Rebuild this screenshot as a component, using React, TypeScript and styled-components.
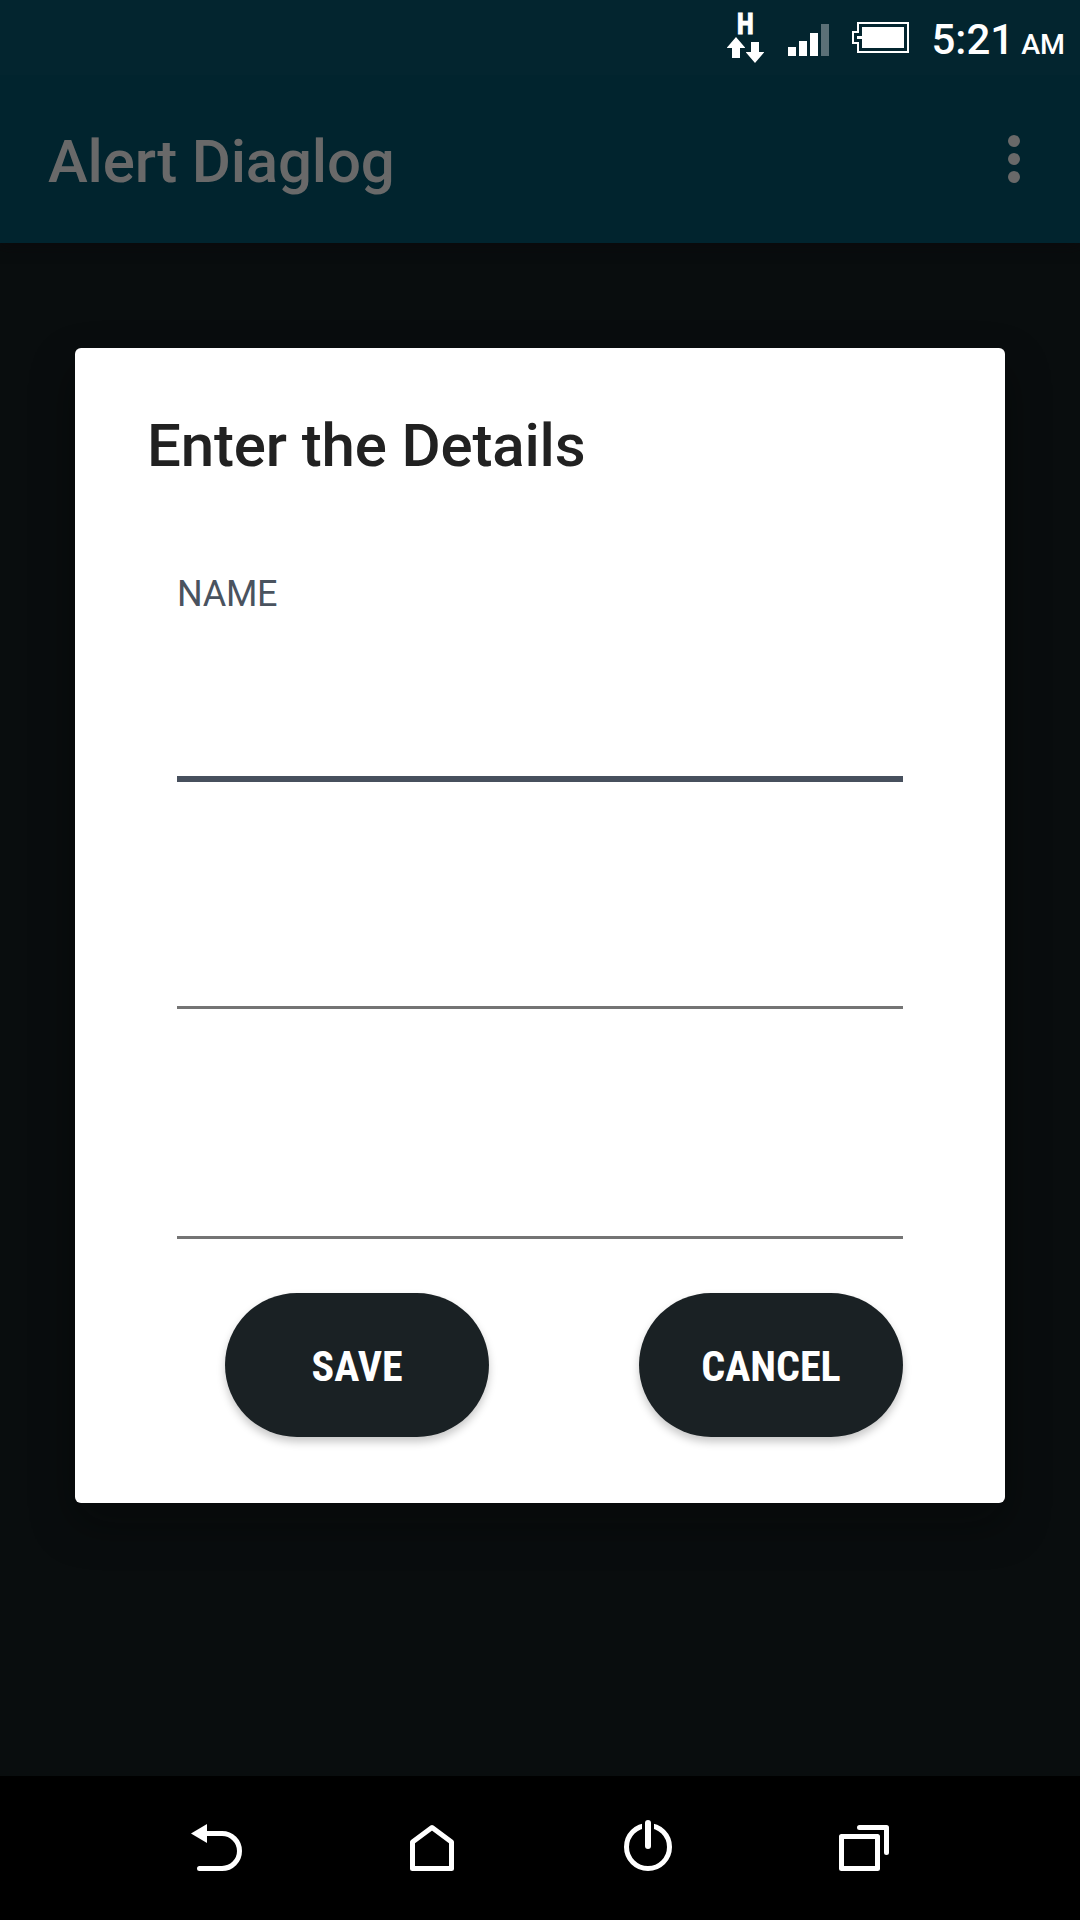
import React from "react";
import styled, { createGlobalStyle } from "styled-components";

const GlobalStyle = createGlobalStyle`
  html, body { margin: 0; padding: 0; background: #090d0e; }
  *, *::before, *::after { box-sizing: border-box; }
  body { font-family: Roboto, "Liberation Sans", sans-serif; }
`;

const Screen = styled.div`
  width: 1080px;
  height: 1920px;
  display: grid;
  grid-template-rows: 75px 168px 1533px 144px;
  background: #090d0e;
  overflow: hidden;
`;

const StatusBar = styled.header`
  display: flex;
  align-items: flex-start;
  justify-content: flex-end;
  padding-right: 15px;
  background: #03252f;
  color: #fff;
  z-index: 2;
`;

const Network = styled.div`
  display: flex;
  flex-direction: column;
  align-items: center;
  width: 38px;
  margin: 13px 24px 0 0;
`;

const NetworkType = styled.span`
  height: 24px;
  font-size: 29.5px;
  font-weight: 900;
  line-height: 23px;
  transform: scaleX(0.8);
  -webkit-text-stroke: 0.8px #fff;
`;

const StatusIcon = styled.svg<{ $top?: number; $right?: number }>`
  display: block;
  flex: none;
  margin-top: ${(p) => p.$top ?? 0}px;
  margin-right: ${(p) => p.$right ?? 0}px;
`;

const Clock = styled.div`
  display: flex;
  align-items: baseline;
  font-weight: 500;
  font-size: 42px;
  line-height: 48px;
  margin-top: 16px;
  gap: 7px;
  white-space: nowrap;
`;

const Meridiem = styled.span`
  font-size: 28.5px;
`;

const AppBar = styled.div`
  display: flex;
  align-items: flex-start;
  justify-content: space-between;
  padding: 60px 60px 0 48px;
  background: #01242e;
  color: #696969;
  z-index: 1;
  box-shadow: 0 3px 12px rgba(12, 8, 10, 0.6);
`;

const AppTitle = styled.h1`
  margin: -9px 0 0;
  font-size: 60px;
  font-weight: 500;
  line-height: 72px;
  letter-spacing: -0.18px;
`;

const Overflow = styled.svg`
  display: block;
`;

const Content = styled.main`
  display: flex;
  justify-content: center;
  align-items: flex-start;
  padding-top: 105px;
`;

const Dialog = styled.section`
  width: 930px;
  height: 1155px;
  display: flex;
  flex-direction: column;
  padding: 62px 102px 0;
  border-radius: 6px;
  background: #fff;
  box-shadow: 0 20px 44px rgba(6, 5, 6, 0.4);
`;

const DialogTitle = styled.h2`
  margin: 0 0 0 -30px;
  font-size: 60px;
  font-weight: 500;
  line-height: 72px;
  letter-spacing: -0.15px;
  color: #212121;
`;

const Field = styled.div<{ $height: number; $active?: boolean }>`
  height: ${(p) => p.$height}px;
  margin-bottom: ${(p) => (p.$active ? 0 : 3)}px;
  display: flex;
  flex-direction: column;
  border-bottom: ${(p) => (p.$active ? "6px solid #47505d" : "3px solid #747474")};
`;

const FieldLabel = styled.label`
  margin-top: 91px;
  font-size: 36px;
  line-height: 42px;
  letter-spacing: -0.3px;
  color: #4a535f;
`;

const Actions = styled.div`
  display: flex;
  justify-content: space-between;
  padding-left: 48px;
  margin-top: 51px;
`;

const ActionButton = styled.button`
  width: 264px;
  height: 144px;
  padding: 3px 0 0;
  border: 0;
  border-radius: 72px;
  background: #1a2124;
  color: #fff;
  font-family: "Roboto Condensed", Roboto, sans-serif;
  font-stretch: 75%;
  font-size: 42px;
  font-weight: 700;
  line-height: 48px;
  box-shadow: 0 5px 9px rgba(0, 0, 0, 0.22);
`;

const NavBar = styled.nav`
  display: grid;
  grid-template-columns: repeat(4, 216px);
  justify-content: center;
  align-items: center;
  justify-items: center;
  background: #000;
`;

const NavIcon = styled.svg`
  display: block;
  width: 72px;
  height: 72px;
  fill: none;
  stroke: #fff;
  stroke-width: 5;
  stroke-linejoin: round;
  stroke-linecap: round;
`;

const PowerBar = styled.path`
  stroke-width: 6;
`;

export default function App() {
  return (
    <>
      <GlobalStyle />
      <Screen>
        <StatusBar>
          <Network>
            <NetworkType>H</NetworkType>
            <StatusIcon width="38" height="27" viewBox="0 0 38 27" fill="#fff">
              <path d="M10 0L19 10.5V11H14V21H6V11H1V10.5ZM25 5H33V15H38V15.5L29 26L20 15.5V15H25Z" />
            </StatusIcon>
          </Network>
          <StatusIcon width="41" height="32" viewBox="0 0 41 32" fill="#fff" $top={24} $right={23}>
            <path d="M0 23H8V32H0ZM11 17H19V32H11ZM22 9H30V32H22Z" />
            <path d="M33 0H41V32H33Z" fill="#5b7077" />
          </StatusIcon>
          <StatusIcon width="57" height="31" viewBox="0 0 57 31" $top={22} $right={22}>
            <path d="M6 1H56V30H6V21H1V10H6Z" fill="none" stroke="#fff" strokeWidth="2" />
            <path d="M10 5H52V26H10V17H5V14H10Z" fill="#fff" />
          </StatusIcon>
          <Clock>
            5:21<Meridiem>AM</Meridiem>
          </Clock>
        </StatusBar>
        <AppBar>
          <AppTitle>Alert Diaglog</AppTitle>
          <Overflow width="12" height="48" viewBox="0 0 12 48" fill="#696969">
            <circle cx="6" cy="6" r="6" />
            <circle cx="6" cy="24" r="6" />
            <circle cx="6" cy="42" r="6" />
          </Overflow>
        </AppBar>
        <Content>
          <Dialog>
            <DialogTitle>Enter the Details</DialogTitle>
            <Field $height={300} $active>
              <FieldLabel>NAME</FieldLabel>
            </Field>
            <Field $height={227} />
            <Field $height={227} />
            <Actions>
              <ActionButton>SAVE</ActionButton>
              <ActionButton>CANCEL</ActionButton>
            </Actions>
          </Dialog>
        </Content>
        <NavBar>
          <NavIcon viewBox="180 1812 72 72">
            <path d="M206 1833.5H222A17.5 17.5 0 0 1 222 1868.5H199.5" />
            <path d="M191 1833.5L207 1824V1843Z" fill="#fff" stroke="none" />
          </NavIcon>
          <NavIcon viewBox="396 1812 72 72">
            <path d="M412.5 1842V1868.5H451.5V1842L432 1827.5Z" />
          </NavIcon>
          <NavIcon viewBox="612 1812 72 72">
            <circle cx="648" cy="1847" r="21.5" />
            <path d="M642 1818H654V1840H642Z" fill="#000" stroke="none" />
            <PowerBar d="M648 1823V1846" />
          </NavIcon>
          <NavIcon viewBox="828 1812 72 72">
            <rect x="841.5" y="1836.5" width="36" height="32" />
            <path d="M859.5 1827.5H886.5V1852.5" />
          </NavIcon>
        </NavBar>
      </Screen>
    </>
  );
}
